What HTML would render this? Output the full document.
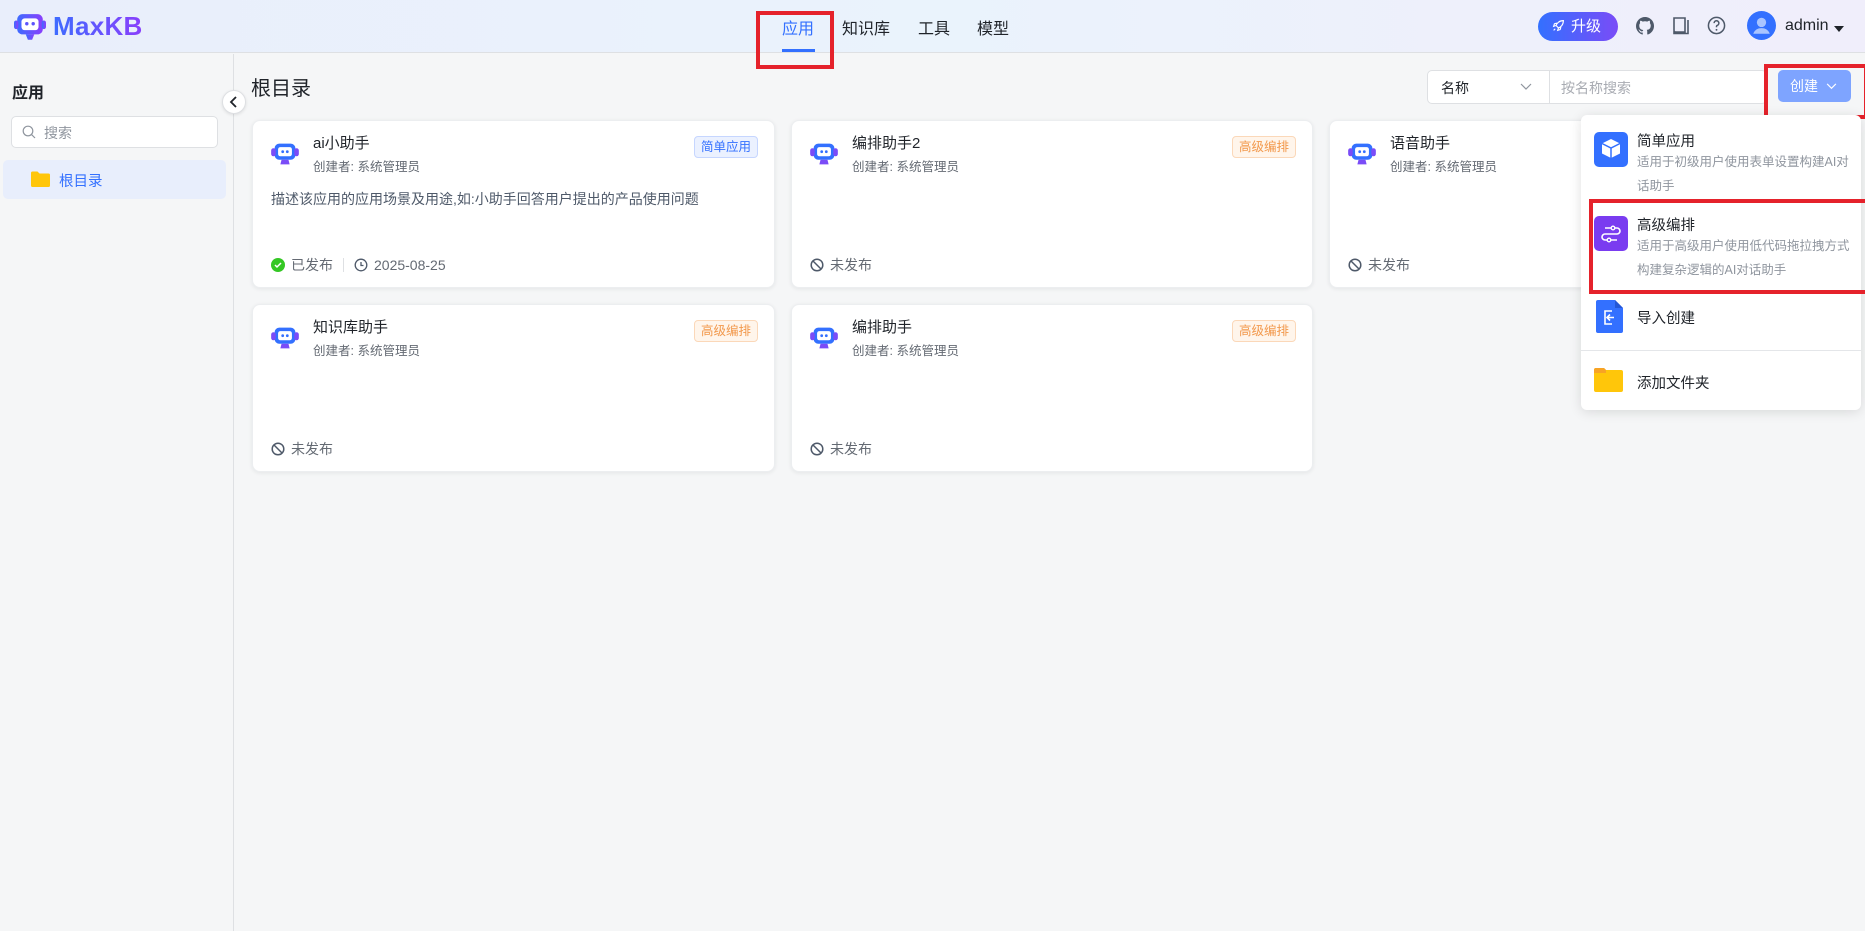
<!DOCTYPE html>
<html><head><meta charset="utf-8">
<style>
*{box-sizing:border-box;margin:0;padding:0}
body{width:1865px;height:931px;overflow:hidden;background:#f5f6f7;font-family:"Liberation Sans","Noto Sans CJK SC",sans-serif;color:#1f2329;position:relative}
.abs{position:absolute}
.hdr{left:0;top:0;width:1865px;height:53px;background:linear-gradient(90deg,#e9eefb 0%,#eaf3fc 50%,#eef0fb 80%,#f0eefb 100%);border-bottom:1px solid #dee0e3}
.nav{top:15px;font-size:16px;color:#1f2329}
.side{left:0;top:54px;width:234px;height:877px;background:#f5f6f7;border-right:1px solid #dee0e3}
.card{background:#fff;border-radius:8px;box-shadow:0 1px 4px rgba(31,35,41,.08);border:1px solid #eceef0}
.card .t{position:absolute;left:60px;top:11px;font-size:15px}
.card .c{position:absolute;left:60px;top:35px;font-size:12.5px;color:#646a73}
.card .f{position:absolute;left:18px;top:134px;font-size:14px;color:#646a73;display:flex;align-items:center;gap:6px}
.tag{position:absolute;right:16px;top:15px;height:22px;padding:0 6px;font-size:12.5px;line-height:20px;border-radius:4px}
.tb{color:#3370ff;background:#ebf1ff;border:1px solid #c6d6ff}
.to{color:#f2984b;background:#fff5eb;border:1px solid #fbd8b9}
.robot{position:absolute;left:17px;top:18px}
.red{border:4px solid #e5222b;position:absolute}
.dd{left:1581px;top:115px;width:280px;height:295px;background:#fff;border-radius:6px;box-shadow:0 2px 12px rgba(0,0,0,.12)}
.dd .ti{position:absolute;left:56px;font-size:14.5px;color:#1f2329}
.dd .de{position:absolute;left:56px;font-size:12.5px;color:#8f959e;line-height:24px;width:215px}
</style></head><body>
<div class="abs hdr"></div>
<svg class="abs" style="left:14px;top:13px" width="32" height="30" viewBox="0 0 30 28"><defs><linearGradient id="lg" x1="0" x2="1"><stop offset="0" stop-color="#3d6bff"/><stop offset="1" stop-color="#8a3ffc"/></linearGradient></defs><rect x="3" y="1" width="24" height="19" rx="5" fill="url(#lg)"/><rect x="0" y="7" width="4" height="8" rx="2" fill="url(#lg)"/><rect x="26" y="7" width="4" height="8" rx="2" fill="url(#lg)"/><rect x="7" y="5" width="16" height="11" rx="3" fill="#fff"/><circle cx="12" cy="10" r="1.6" fill="#5b53fc"/><circle cx="18" cy="10" r="1.6" fill="#5b53fc"/><path d="M11 20h8l-2 5h-4z" fill="url(#lg)"/></svg>
<div class="abs" style="left:53px;top:11px;font-size:26px;font-weight:bold;letter-spacing:0.3px;background:linear-gradient(90deg,#3d6bff,#8a3ffc);-webkit-background-clip:text;color:transparent">MaxKB</div>
<div class="abs nav" style="left:782px;color:#3370ff">应用</div>
<div class="abs" style="left:782px;top:49px;width:33px;height:3px;background:#3370ff"></div>
<div class="abs nav" style="left:842px">知识库</div>
<div class="abs nav" style="left:918px">工具</div>
<div class="abs nav" style="left:977px">模型</div>
<div class="red" style="left:756px;top:11px;width:78px;height:58px"></div>
<div class="abs" style="left:1538px;top:12px;width:80px;height:29px;border-radius:15px;background:linear-gradient(90deg,#3370ff,#7a4cf7);color:#fff;font-size:15px;line-height:29px;padding-left:14px">
<svg width="13" height="13" viewBox="0 0 16 16" style="vertical-align:-1px;margin-right:6px"><path d="M14 2C9 2 6 5 5 8l3 3c3-1 6-4 6-9zM5 8 2 9l1-3 3-1M8 11l-1 3 3-1 1-3M4 12l-2 2" fill="none" stroke="#fff" stroke-width="1.4"/></svg>升级</div>
<svg class="abs" style="left:1636px;top:17px" width="18" height="18" viewBox="0 0 16 16"><path fill="#4e5969" d="M8 0C3.6 0 0 3.6 0 8c0 3.5 2.3 6.5 5.5 7.6.4.1.5-.2.5-.4v-1.4c-2.2.5-2.7-1-2.7-1-.4-.9-.9-1.2-.9-1.2-.7-.5.1-.5.1-.5.8.1 1.2.8 1.2.8.7 1.300 1.9.9 2.3.7.1-.5.3-.9.5-1.100-1.8-.2-3.6-.9-3.6-4 0-.9.3-1.600.8-2.100-.1-.2-.4-1 .1-2.100 0 0 .7-.2 2.2.8.6-.2 1.3-.3 2-.3s1.4.1 2 .3c1.5-1 2.2-.8 2.2-.8.4 1.100.2 1.900.1 2.100.5.6.8 1.300.8 2.100 0 3.100-1.900 3.700-3.600 3.900.3.3.5.8.5 1.500v2.200c0 .2.1.5.6.4C13.7 14.5 16 11.5 16 8c0-4.4-3.600-8-8-8z"/></svg>
<svg class="abs" style="left:1672px;top:16px" width="18" height="20" viewBox="0 0 18 20"><path d="M2 2h11v14H3.5A1.5 1.5 0 0 1 2 14.5zM2 15v2.5h14V4" fill="none" stroke="#4e5969" stroke-width="1.6"/></svg>
<svg class="abs" style="left:1707px;top:16px" width="19" height="19" viewBox="0 0 20 20"><circle cx="10" cy="10" r="8.5" fill="none" stroke="#4e5969" stroke-width="1.6"/><path d="M7.5 7.5a2.5 2.5 0 1 1 3.2 2.4c-.5.2-.7.6-.7 1.1v.8" fill="none" stroke="#4e5969" stroke-width="1.6"/><circle cx="10" cy="14.5" r="1" fill="#4e5969"/></svg>
<svg class="abs" style="left:1747px;top:11px" width="29" height="29" viewBox="0 0 28 28"><circle cx="14" cy="14" r="14" fill="#3370ff"/><circle cx="14" cy="11" r="4.5" fill="#a9c4ff"/><path d="M6 22c1.5-4 4.5-5.5 8-5.5s6.5 1.5 8 5.5" fill="#a9c4ff"/></svg>
<div class="abs" style="left:1785px;top:17px;font-size:16px;color:#1f2329">admin</div>
<div class="abs" style="left:1834px;top:26px;border:5px solid transparent;border-top:6px solid #1f2329"></div>
<div class="abs side"></div>
<div class="abs" style="left:12px;top:79px;font-size:16px;font-weight:bold">应用</div>
<div class="abs" style="left:11px;top:116px;width:207px;height:32px;background:#fff;border:1px solid #dee0e3;border-radius:5px"></div>
<svg class="abs" style="left:22px;top:125px" width="14" height="14" viewBox="0 0 14 14"><circle cx="6" cy="6" r="4.8" fill="none" stroke="#8f959e" stroke-width="1.2"/><path d="M9.5 9.5 13 13" stroke="#8f959e" stroke-width="1.2"/></svg>
<div class="abs" style="left:44px;top:123px;font-size:14px;color:#8f959e">搜索</div>
<div class="abs" style="left:3px;top:160px;width:223px;height:39px;background:#e8eefc;border-radius:5px"></div>
<svg class="abs" style="left:31px;top:171px" width="19" height="16" viewBox="0 0 19 16"><path d="M0 2a1.5 1.5 0 0 1 1.5-1.5h5l2 2h9A1.5 1.5 0 0 1 19 4v10.5A1.5 1.5 0 0 1 17.5 16h-16A1.5 1.5 0 0 1 0 14.5z" fill="#ffc60a"/></svg>
<div class="abs" style="left:59px;top:170px;font-size:14.5px;color:#3370ff">根目录</div>
<div class="abs" style="left:222px;top:90px;width:24px;height:24px;border-radius:50%;background:#fff;border:1px solid #dee0e3;box-shadow:0 1px 3px rgba(0,0,0,.1)"></div>
<svg class="abs" style="left:229px;top:96px" width="10" height="12" viewBox="0 0 10 12"><path d="M7 1 2 6l5 5" fill="none" stroke="#1f2329" stroke-width="1.8"/></svg>
<div class="abs" style="left:251px;top:72px;font-size:20px">根目录</div>
<div class="abs" style="left:1427px;top:70px;width:340px;height:34px;background:#fff;border:1px solid #dee0e3;border-radius:5px"></div>
<div class="abs" style="left:1549px;top:71px;width:1px;height:32px;background:#dee0e3"></div>
<div class="abs" style="left:1441px;top:78px;font-size:14px">名称</div>
<svg class="abs" style="left:1520px;top:83px" width="12" height="8" viewBox="0 0 12 8"><path d="M1 1l5 5 5-5" fill="none" stroke="#8f959e" stroke-width="1.2"/></svg>
<div class="abs" style="left:1561px;top:78px;font-size:14px;color:#a8abb2">按名称搜索</div>
<div class="abs" style="left:1778px;top:70px;width:73px;height:32px;background:#7ea4ff;border-radius:5px;color:#fff;font-size:14px;line-height:32px;padding-left:12px">创建
<svg width="11" height="7" viewBox="0 0 12 8" style="margin-left:4px;vertical-align:1px"><path d="M1 1l5 5 5-5" fill="none" stroke="#fff" stroke-width="1.4"/></svg></div>
<div class="red" style="left:1764px;top:64px;width:104px;height:55px"></div>
<svg width="0" height="0" style="position:absolute"><defs><symbol id="rb" viewBox="0 0 26 26"><rect x="4" y="4" width="18" height="14" rx="4" fill="#3370ff"/><rect x="1" y="8" width="4" height="7" rx="2" fill="#7a4cf7"/><rect x="21" y="8" width="4" height="7" rx="2" fill="#7a4cf7"/><rect x="7" y="7" width="12" height="8" rx="2" fill="#fff"/><circle cx="11" cy="11" r="1.2" fill="#3370ff"/><circle cx="15" cy="11" r="1.2" fill="#3370ff"/><path d="M10 18h6l1 4H9z" fill="#7a4cf7"/></symbol>
<symbol id="nopub" viewBox="0 0 14 14"><circle cx="7" cy="7" r="5.8" fill="none" stroke="#4e5969" stroke-width="1.5"/><path d="M3 3l8 8" stroke="#4e5969" stroke-width="1.5"/></symbol></defs></svg>
<div class="abs card" style="left:252px;top:120px;width:523px;height:168px">
<svg class="robot" width="30" height="30"><use href="#rb"/></svg>
<div class="t">ai小助手</div><div class="c">创建者: 系统管理员</div>
<div class="tag tb">简单应用</div>
<div class="abs" style="left:18px;top:68px;font-size:14px;color:#4e5969">描述该应用的应用场景及用途,如:小助手回答用户提出的产品使用问题</div>
<div class="f"><svg width="14" height="14" viewBox="0 0 14 14"><circle cx="7" cy="7" r="7" fill="#34c724"/><path d="M4 7l2 2 4-4" fill="none" stroke="#fff" stroke-width="1.5"/></svg>已发布<span style="width:1px;height:14px;background:#dee0e3;margin:0 4px"></span><svg width="14" height="14" viewBox="0 0 14 14"><circle cx="7" cy="7" r="5.8" fill="none" stroke="#4e5969" stroke-width="1.3"/><path d="M7 4v3.5h2.5" fill="none" stroke="#4e5969" stroke-width="1.3"/></svg>2025-08-25</div>
</div>
<div class="abs card" style="left:791px;top:120px;width:522px;height:168px">
<svg class="robot" width="30" height="30"><use href="#rb"/></svg>
<div class="t">编排助手2</div><div class="c">创建者: 系统管理员</div><div class="tag to">高级编排</div>
<div class="f"><svg width="14" height="14"><use href="#nopub"/></svg>未发布</div>
</div>
<div class="abs card" style="left:1329px;top:120px;width:522px;height:168px">
<svg class="robot" width="30" height="30"><use href="#rb"/></svg>
<div class="t">语音助手</div><div class="c">创建者: 系统管理员</div>
<div class="f"><svg width="14" height="14"><use href="#nopub"/></svg>未发布</div>
</div>
<div class="abs card" style="left:252px;top:304px;width:523px;height:168px">
<svg class="robot" width="30" height="30"><use href="#rb"/></svg>
<div class="t">知识库助手</div><div class="c">创建者: 系统管理员</div><div class="tag to">高级编排</div>
<div class="f"><svg width="14" height="14"><use href="#nopub"/></svg>未发布</div>
</div>
<div class="abs card" style="left:791px;top:304px;width:522px;height:168px">
<svg class="robot" width="30" height="30"><use href="#rb"/></svg>
<div class="t">编排助手</div><div class="c">创建者: 系统管理员</div><div class="tag to">高级编排</div>
<div class="f"><svg width="14" height="14"><use href="#nopub"/></svg>未发布</div>
</div>
<div class="abs dd">
<svg class="abs" style="left:13px;top:17px" width="34" height="35" viewBox="0 0 34 35"><rect width="34" height="35" rx="5" fill="#3370ff"/><path d="M17 7l9 4.5v10L17 26l-9-4.5v-10z" fill="#fff"/><path d="M8 11.5l9 4.5 9-4.5M17 16v10" stroke="#3370ff" stroke-width="1.5" fill="none"/></svg>
<div class="ti" style="top:15px">简单应用</div>
<div class="de" style="top:35px">适用于初级用户使用表单设置构建AI对话助手</div>
<svg class="abs" style="left:13px;top:101px" width="34" height="35" viewBox="0 0 34 35"><rect width="34" height="35" rx="5" fill="#7a3cf0"/><path d="M11 12h12a3 3 0 0 1 0 6H11a3 3 0 0 0 0 6h12" fill="none" stroke="#fff" stroke-width="1.6"/><circle cx="19" cy="12" r="1.8" fill="#7a3cf0" stroke="#fff" stroke-width="1.4"/><circle cx="15" cy="24" r="1.8" fill="#7a3cf0" stroke="#fff" stroke-width="1.4"/></svg>
<div class="ti" style="top:99px">高级编排</div>
<div class="de" style="top:119px">适用于高级用户使用低代码拖拉拽方式构建复杂逻辑的AI对话助手</div>
<svg class="abs" style="left:15px;top:185px" width="27" height="33" viewBox="0 0 27 33"><path d="M0 2a2 2 0 0 1 2-2h17l8 8v23a2 2 0 0 1-2 2H2a2 2 0 0 1-2-2z" fill="#3370ff"/><path d="M19 0v8h8z" fill="#2457d6"/><path d="M16 11H9v13h7M18 17.5h-7M14 14.5l-3 3 3 3" fill="none" stroke="#fff" stroke-width="1.6"/></svg>
<div class="ti" style="top:192px">导入创建</div>
<div class="abs" style="left:0;top:235px;width:280px;height:1px;background:#e4e6e9"></div>
<svg class="abs" style="left:13px;top:253px" width="29" height="24" viewBox="0 0 29 24"><path d="M0 2a2 2 0 0 1 2-2h8l2 2h15a2 2 0 0 1 2 2v18a2 2 0 0 1-2 2H2a2 2 0 0 1-2-2z" fill="#ffc60a"/><path d="M0 2a2 2 0 0 1 2-2h8l2 2v3H0z" fill="#f7a325"/></svg>
<div class="ti" style="top:257px">添加文件夹</div>
</div>
<div class="red" style="left:1589px;top:199px;width:280px;height:95px"></div>
</body></html>
